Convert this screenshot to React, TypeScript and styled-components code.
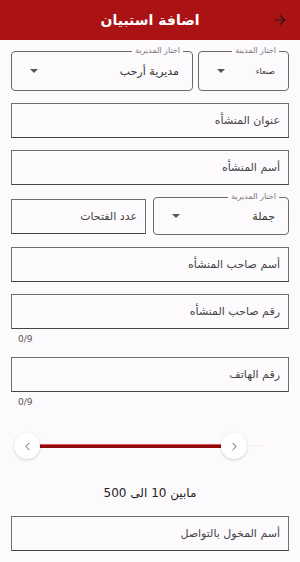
import React from "react";
import styled, { createGlobalStyle } from "styled-components";
import { ArrowRight, ChevronLeft, ChevronRight } from "lucide-react";

const GlobalStyle = createGlobalStyle`
  html, body {
    margin: 0;
    padding: 0;
    background: #fdfafd;
  }
  body {
    font-family: "DejaVu Sans", "Noto Sans", sans-serif;
  }
`;

const MIN = 10;
const MAX = 500;

const App = () => {
  const low = 10;
  const high = 442;
  const lowPct = ((low - MIN) / (MAX - MIN)) * 100;
  const highPct = ((high - MIN) / (MAX - MIN)) * 100;

  return (
    <Page>
      <GlobalStyle />
      <Header>
        <BackButton>
          <ArrowRight size={16} strokeWidth={1.6} />
        </BackButton>
        <Title>اضافة استبيان</Title>
        <span />
      </Header>

      <Form>
        <Row>
          <Dropdown width={91} height={40}>
            <Legend>اختار المدينة</Legend>
            <Value small>صنعاء</Value>
            <Caret />
          </Dropdown>
          <Dropdown width={182} height={40}>
            <Legend>اختار المديرية</Legend>
            <Value>مديرية أرحب</Value>
            <Caret />
          </Dropdown>
        </Row>

        <TextBox>عنوان المنشأه</TextBox>
        <TextBox>أسم المنشأه</TextBox>

        <Row gap={7}>
          <Dropdown width={136} height={38}>
            <Legend>اختار المديرية</Legend>
            <Value>جملة</Value>
            <Caret />
          </Dropdown>
          <TextBox width={135}>عدد الفتحات</TextBox>
        </Row>

        <TextBox>أسم صاحب المنشأه</TextBox>

        <FieldGroup>
          <TextBox>رقم صاحب المنشأه</TextBox>
          <Counter>0/9</Counter>
        </FieldGroup>

        <FieldGroup>
          <TextBox>رقم الهاتف</TextBox>
          <Counter>0/9</Counter>
        </FieldGroup>

        <SliderBlock>
          <Slider>
            <Rail />
            <ActiveRail
              style={{ left: `${lowPct}%`, width: `${highPct - lowPct}%` }}
            />
            <Thumb style={{ left: `${lowPct}%` }}>
              <ChevronLeft size={13} strokeWidth={1.8} />
            </Thumb>
            <Thumb style={{ left: `${highPct}%` }}>
              <ChevronRight size={13} strokeWidth={1.8} />
            </Thumb>
          </Slider>
          <Caption>مابين 10 الى 500</Caption>
        </SliderBlock>

        <TextBox>أسم المخول بالتواصل</TextBox>
      </Form>
    </Page>
  );
};

export default App;

const Page = styled.div`
  width: 300px;
  min-height: 562px;
  direction: rtl;
  background: #fdfafd;
  overflow: hidden;
`;

const Header = styled.header`
  height: 40px;
  background: #aa1214;
  display: grid;
  grid-template-columns: 40px 1fr 40px;
  align-items: center;
`;

const BackButton = styled.div`
  display: flex;
  justify-content: center;
  align-items: center;
  color: #1a1a1a;
`;

const Title = styled.h1`
  margin: 0;
  text-align: center;
  color: #fff;
  font-size: 14px;
  font-weight: bold;
`;

const Form = styled.div`
  display: flex;
  flex-direction: column;
  gap: 12px;
  padding: 11px 11px 20px;
`;

const Row = styled.div<{ gap?: number }>`
  display: flex;
  align-items: center;
  gap: ${(p) => p.gap ?? 5}px;
`;

const Dropdown = styled.div<{ width: number; height: number }>`
  position: relative;
  box-sizing: border-box;
  width: ${(p) => p.width}px;
  height: ${(p) => p.height}px;
  border: 1px solid #6a6a6a;
  border-radius: 4px;
  display: flex;
  align-items: center;
  justify-content: space-between;
  padding: 0 13px 0 18px;
`;

const Legend = styled.span`
  position: absolute;
  top: -6px;
  right: 9px;
  padding: 0 3px;
  background: #fdfafd;
  font-size: 8px;
  line-height: 10px;
  color: #777;
`;

const Value = styled.span<{ small?: boolean }>`
  font-size: ${(p) => (p.small ? 8 : 11)}px;
  color: #333;
`;

const Caret = styled.span`
  width: 0;
  height: 0;
  border-left: 4px solid transparent;
  border-right: 4px solid transparent;
  border-top: 4px solid #555;
`;

const TextBox = styled.div<{ width?: number }>`
  box-sizing: border-box;
  width: ${(p) => (p.width ? `${p.width}px` : "100%")};
  height: 35px;
  border: 1px solid #6e6e6e;
  border-bottom-color: #444;
  display: flex;
  align-items: center;
  padding: 0 8px;
  font-size: 11px;
  color: #444;
`;

const FieldGroup = styled.div`
  display: flex;
  flex-direction: column;
  gap: 4px;
`;

const Counter = styled.div`
  direction: ltr;
  text-align: left;
  padding-left: 7px;
  font-size: 9px;
  line-height: 12px;
  color: #555;
`;

const SliderBlock = styled.div`
  padding: 13px 0 3px;
  display: flex;
  flex-direction: column;
  gap: 26px;
`;

const Slider = styled.div`
  position: relative;
  direction: ltr;
  height: 26px;
  margin: 0 27px 0 16px;
`;

const Rail = styled.div`
  position: absolute;
  left: 0;
  right: 0;
  top: 12px;
  height: 2px;
  background: #faf2f5;
`;

const ActiveRail = styled.div`
  position: absolute;
  top: 12px;
  height: 3px;
  background: #8d0b0d;
  box-shadow: 0 -1px 0 #e05a5c;
`;

const Thumb = styled.div`
  position: absolute;
  top: 0;
  width: 26px;
  height: 26px;
  margin-left: -13px;
  border-radius: 50%;
  background: #fff;
  box-shadow: 0 1px 3px rgba(0, 0, 0, 0.18);
  display: flex;
  align-items: center;
  justify-content: center;
  color: #555;
`;

const Caption = styled.div`
  text-align: center;
  font-size: 12px;
  line-height: 16px;
  color: #222;
  font-weight: 500;
`;
